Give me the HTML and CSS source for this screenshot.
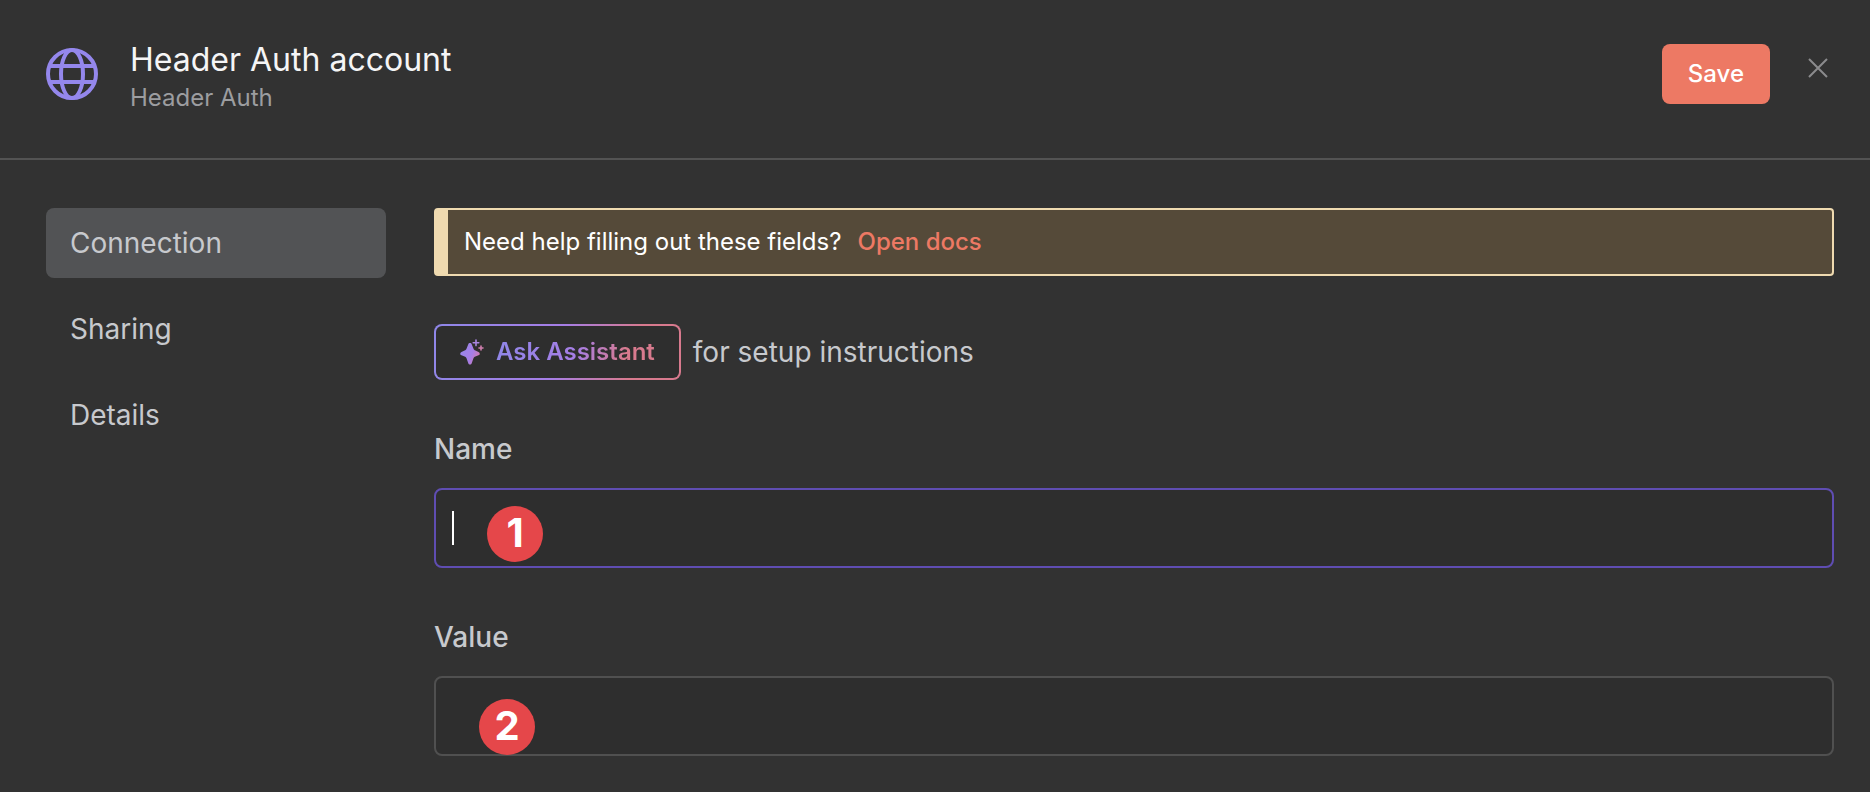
FILE: index.html
```
<!DOCTYPE html>
<html lang="en">
<head>
    <meta charset="UTF-8">
    <meta name="viewport" content="width=device-width, initial-scale=1.0">
    <title>Header Auth account</title>
    <link rel="stylesheet" href="styles.css">
</head>
<body>
    <header class="modal-header">
        <svg class="globe" viewBox="0 0 52 52" aria-hidden="true">
            <g fill="none" stroke="currentColor" stroke-width="4">
                <circle cx="26" cy="26" r="24"/>
                <ellipse cx="26" cy="26" rx="11" ry="24"/>
                <path d="M4 18h44M4 34h44"/>
            </g>
        </svg>
        <div class="heading">
            <h1>Header Auth account</h1>
            <p>Header Auth</p>
        </div>
        <button class="save-button" type="button">Save</button>
        <button class="close-button" type="button" aria-label="Close">
            <svg viewBox="0 0 20 20"><path d="M1 1l18 18M19 1L1 19" fill="none" stroke="currentColor" stroke-width="2"/></svg>
        </button>
    </header>

    <div class="modal-body">
        <nav class="sidebar">
            <a class="active" href="#connection">Connection</a>
            <a href="#sharing">Sharing</a>
            <a href="#details">Details</a>
        </nav>

        <main class="content">
            <div class="notice">
                <span>Need help filling out these fields?</span>
                <a href="#docs">Open docs</a>
            </div>

            <div class="assistant">
                <button class="assistant-button" type="button">
                    <svg viewBox="0 0 24 26" aria-hidden="true">
                        <defs>
                            <linearGradient id="spark" x1="0" y1="10" x2="20" y2="18" gradientUnits="userSpaceOnUse">
                                <stop offset="0" stop-color="#9688ea"/>
                                <stop offset="0.6" stop-color="#a67ee6"/>
                                <stop offset="1" stop-color="#d87aaa"/>
                            </linearGradient>
                        </defs>
                        <path fill="url(#spark)" d="M10 4C10.800 4 11.500 4.500 11.800 5.400L13.400 9.600C13.800 10.700 14.400 11.200 15.400 11.600L18.500 12.900C20.200 13.700 20.200 15.600 18.500 16.300L15.400 17.600C14.400 18 13.800 18.500 13.400 19.600L11.800 24C11.500 25 10.800 25.500 10 25.500C9.200 25.500 8.500 25 8.200 24L6.600 19.600C6.200 18.500 5.600 18 4.600 17.600L1.500 16.300C-.200 15.600-.200 13.700 1.500 12.900L4.600 11.600C5.600 11.200 6.200 10.700 6.600 9.600L8.200 5.400C8.500 4.500 9.200 4 10 4Z"/>
                        <path fill="none" stroke="#a985e0" stroke-width="1.600" stroke-linecap="round" d="M16 1v5.600M13.200 3.800h5.600"/>
                        <path fill="none" stroke="#cf7fae" stroke-width="1.600" stroke-linecap="round" d="M21 7v4M19 9h4"/>
                    </svg>
                    <span>Ask Assistant</span>
                </button>
                <span>for setup instructions</span>
            </div>

            <div class="field">
                <label for="name">Name</label>
                <div class="field-box">
                    <input class="focused" id="name" type="text">
                    <span class="caret"></span>
                    <span class="badge badge-name">1</span>
                </div>
            </div>

            <div class="field">
                <label for="value">Value</label>
                <div class="field-box">
                    <input id="value" type="text">
                    <span class="badge badge-value">2</span>
                </div>
            </div>
        </main>
    </div>
</body>
</html>
```
FILE: styles.css
```
* {
    box-sizing: border-box;
}

body {
    margin: 0;
    background: #323232;
    color: #c7c9cd;
    font-family: Inter, sans-serif;
    font-size: 28px;
    line-height: 36px;
}

button,
input {
    font: inherit;
}

a {
    text-decoration: none;
}

.modal-header {
    display: flex;
    align-items: flex-start;
    padding: 40px 36px 42px 46px;
    border-bottom: 2px solid #535353;
}

.globe {
    width: 52px;
    height: 52px;
    margin-top: 8px;
    color: #9487ec;
}

.heading {
    flex: 1;
    margin-left: 32px;
}

.heading h1 {
    margin: 0;
    color: #f5f5f6;
    font-size: 32px;
    font-weight: 400;
    line-height: 40px;
}

.heading p {
    margin: 0;
    color: #9c9da0;
    font-size: 24px;
    line-height: 36px;
}

.save-button {
    height: 60px;
    margin-top: 4px;
    padding: 0 26px;
    border: 0;
    border-radius: 8px;
    background: #ed7964;
    color: #fff;
    font-size: 24px;
    font-weight: 500;
}

.close-button {
    display: flex;
    margin: 12px 0 0 32px;
    padding: 6px;
    border: 0;
    background: none;
    color: #8b8b8d;
}

.close-button svg {
    width: 20px;
    height: 20px;
}

.modal-body {
    display: flex;
    gap: 48px;
    padding: 48px 36px 36px 46px;
}

.sidebar {
    display: flex;
    flex: 0 0 340px;
    flex-direction: column;
    gap: 16px;
}

.sidebar a {
    padding: 17px 24px;
    border-radius: 8px;
    color: #c7c9cd;
}

.sidebar .active {
    background: #525355;
}

.content {
    flex: 1;
}

.notice {
    display: flex;
    gap: 16px;
    padding: 14px 16px;
    border: 2px solid #efdab0;
    border-left-width: 14px;
    border-radius: 4px;
    background: #554a39;
    color: #fff;
    font-size: 24px;
}

.notice a {
    color: #ed7964;
    font-weight: 500;
}

.assistant {
    display: flex;
    align-items: center;
    gap: 12px;
    margin: 48px 0;
}

.assistant-button {
    display: flex;
    align-items: center;
    gap: 12px;
    height: 56px;
    padding: 0 24px;
    border: 2px solid transparent;
    border-radius: 8px;
    background:
        linear-gradient(#2e2e2e, #2e2e2e) padding-box,
        linear-gradient(105deg, #8f87e8 0%, #a67ee6 50%, #d87a8e 80%, #d87a8e 100%) border-box;
    font-size: 24px;
    font-weight: 600;
}

.assistant-button svg {
    width: 24px;
    height: 26px;
}

.assistant-button span {
    background: linear-gradient(105deg, #8f87e8 0%, #a67ee6 50%, #d87a8e 80%, #d87a8e 100%);
    background-clip: text;
    -webkit-background-clip: text;
    color: transparent;
}

.field + .field {
    margin-top: 48px;
}

.field label {
    display: block;
    margin-bottom: 18px;
    font-weight: 500;
    line-height: 42px;
}

.field-box {
    position: relative;
}

.field input {
    display: block;
    width: 100%;
    height: 80px;
    padding: 0 16px;
    border: 2px solid #505050;
    border-radius: 8px;
    outline: 0;
    background: #2e2e2e;
    color: #fff;
}

.field .focused {
    border-color: #5f4db2;
}

.caret {
    position: absolute;
    top: 23px;
    left: 18px;
    width: 2px;
    height: 34px;
    background: #fff;
}

/* Numbered step markers lying over the inputs */
.badge {
    position: absolute;
    width: 56px;
    height: 56px;
    border-radius: 50%;
    background: #e5474a;
    color: #fff;
    font-size: 40px;
    font-weight: 700;
    line-height: 54px;
    text-align: center;
}

.badge-name {
    top: 18px;
    left: 53px;
}

.badge-value {
    top: 23px;
    left: 45px;
}
```
